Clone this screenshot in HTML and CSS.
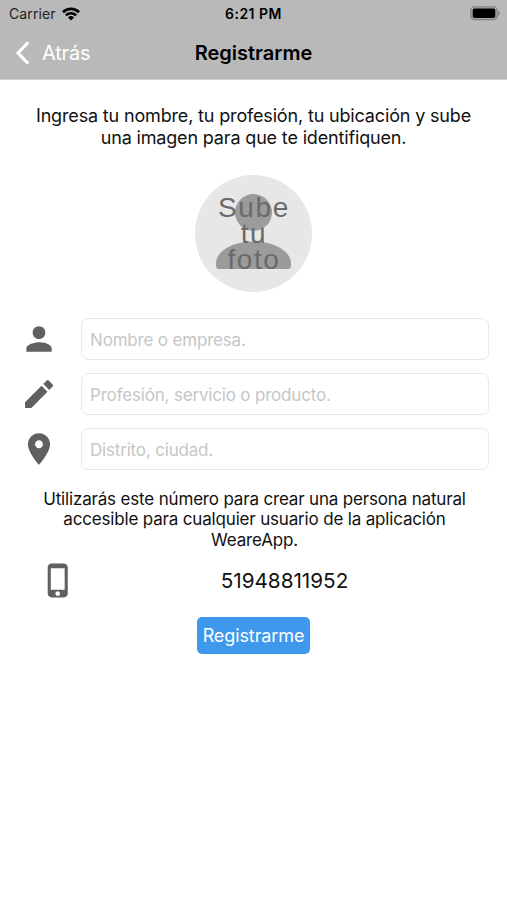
FILE: index.html
```
<!DOCTYPE html>
<html lang="es">
<head>
	<meta charset="UTF-8">
	<title>Registrarme</title>
	<link rel="stylesheet" href="styles.css">
</head>
<body>

	<div class="header">
		<div class="status">
			<div class="status-left">
				<span class="carrier">Carrier</span>
				<svg class="wifi" width="18" height="14" viewBox="0 0 18 14">
					<path d="M1 5.2a11.4 11.4 0 0 1 16 0" fill="none" stroke="#000" stroke-width="2.7"/>
					<path d="M3.9 8.3a7.3 7.3 0 0 1 10.2 0" fill="none" stroke="#000" stroke-width="2.5"/>
					<path d="M9 13.5L6 10.5a4.3 4.3 0 0 1 6 0z"/>
				</svg>
			</div>
			<div class="status-time">6:21 PM</div>
			<div class="status-right">
				<svg width="31" height="15" viewBox="0 0 31 15">
					<rect x="0.8" y="0.8" width="26.4" height="12.9" rx="3.6" fill="#aaa" stroke="#858585" stroke-width="1.3"/>
					<rect x="2.7" y="2.6" width="22.6" height="9.4" rx="1.8"/>
					<path d="M28.2 4.9c2.2.8 2.2 4 0 4.8z" fill="#858585"/>
				</svg>
			</div>
		</div>
		<div class="navbar">
			<a class="back" href="#">
				<svg width="16" height="24" viewBox="0 0 16 24">
					<path d="M13.2 1.4L3 12l10.2 10.6" fill="none" stroke="#fff" stroke-width="3.1"/>
				</svg>
				<span>Atrás</span>
			</a>
			<h1 class="title">Registrarme</h1>
		</div>
	</div>

	<div class="content">
		<p class="intro">Ingresa tu nombre, tu profesión, tu ubicación y sube<br>una imagen para que te identifiquen.</p>

		<div class="photo">
			<svg class="photo-icon" width="117" height="117" viewBox="0 0 117 117">
				<circle cx="58.5" cy="37.5" r="18.5"/>
				<path d="M21 91C19.5 76 37.5 66.500 58.500 66.500s39 9.500 37.500 24.500q-.3 3-3 3h-69q-2.700 0-3-3z"/>
			</svg>
			<div class="photo-text">Sube<br>tu<br>foto</div>
		</div>

		<form class="form">
			<div class="field">
				<svg class="field-icon" width="38" height="38" viewBox="0 0 24 24">
					<path d="M12 12c2.210 0 4-1.790 4-4s-1.790-4-4-4-4 1.790-4 4 1.790 4 4 4zm0 2c-2.670 0-8 1.340-8 4v2h16v-2c0-2.660-5.330-4-8-4z"/>
				</svg>
				<input type="text" placeholder="Nombre o empresa.">
			</div>
			<div class="field">
				<svg class="field-icon" width="38" height="38" viewBox="0 0 38 38">
					<path d="M5 32.2v-5L21.500 10.800l6 6L11.300 33H5.800q-.8 0-.8-.8z"/>
					<path d="M23.300 9l3.400-3.400q1-1 2 0l3.900 3.900q1 1 0 2L29.300 15z"/>
				</svg>
				<input type="text" placeholder="Profesión, servicio o producto.">
			</div>
			<div class="field">
				<svg class="field-icon" width="38" height="38" viewBox="0 0 24 24">
					<path d="M12 2C8.130 2 5 5.130 5 9c0 5.250 7 13 7 13s7-7.750 7-13c0-3.870-3.130-7-7-7zm0 9.500c-1.380 0-2.500-1.120-2.500-2.500s1.120-2.500 2.500-2.500 2.500 1.120 2.500 2.500-1.120 2.500-2.500 2.500z"/>
				</svg>
				<input type="text" placeholder="Distrito, ciudad.">
			</div>

			<p class="note">Utilizarás este número para crear una persona natural<br>accesible para cualquier usuario de la aplicación<br>WeareApp.</p>

			<div class="phone">
				<svg class="phone-icon" width="37" height="37" viewBox="0 0 24 24">
					<path d="M15.500 1h-8C6.120 1 5 2.120 5 3.500v17C5 21.880 6.120 23 7.500 23h8c1.380 0 2.500-1.120 2.500-2.500v-17C18 2.120 16.880 1 15.500 1zm-4 21c-.83 0-1.500-.67-1.500-1.500s.67-1.500 1.500-1.500 1.500.67 1.500 1.500-.67 1.500-1.500 1.500zm4.500-4H7V4h9v14z"/>
				</svg>
				<div class="phone-number">51948811952</div>
			</div>

			<button class="btn" type="button">Registrarme</button>
		</form>
	</div>

</body>
</html>
```

FILE: styles.css
```
* {
	box-sizing: border-box;
}
body {
	margin: 0;
	background-color: #fff;
	color: #111;
	font-family: Inter, "Liberation Sans", sans-serif;
}

.header {
	height: 80px;
	background-color: #b9b9b9;
	border-bottom: 1px solid #cfcfcf;
}
.status {
	display: grid;
	grid-template-columns: 1fr auto 1fr;
	align-items: center;
	height: 27px;
	padding: 0 6px 0 9px;
	font-size: 14px;
}
.status-left {
	display: flex;
	align-items: center;
	gap: 6px;
	color: #222;
}
.carrier {
	letter-spacing: 0.1px;
}
.status-time {
	margin-left: -3px;
	color: #000;
	font-weight: 600;
	letter-spacing: 0.500px;
}
.status-right {
	display: flex;
	justify-content: flex-end;
}

.navbar {
	display: grid;
	grid-template-columns: 1fr auto 1fr;
	align-items: center;
	height: 51px;
	padding: 0 15px;
}
.back {
	display: flex;
	align-items: center;
	gap: 11px;
	color: #fff;
	font-size: 20px;
	letter-spacing: -0.2px;
	text-decoration: none;
}
.title {
	margin: 0;
	color: #000;
	font-size: 20px;
	font-weight: 600;
}

.content {
	padding: 25px 18px 0;
}
.intro {
	margin: 0;
	font-size: 18px;
	line-height: 21.500px;
	letter-spacing: -0.160px;
	text-align: center;
	white-space: nowrap;
}

.photo {
	display: grid;
	width: 117px;
	height: 117px;
	margin: 27px auto 26px;
	border-radius: 50%;
	background-color: #e7e7e7;
}
.photo-icon, .photo-text {
	grid-area: 1 / 1;
}
.photo-icon {
	fill: #9b9b9b;
}
.photo-text {
	padding: 20px 0 0 1px;
	color: #6a6a6a;
	font-family: "Liberation Sans", Arial, sans-serif;
	font-size: 28px;
	line-height: 26px;
	letter-spacing: 1.600px;
	text-align: center;
}

.field {
	display: flex;
	align-items: center;
	gap: 23px;
	height: 42px;
	margin-bottom: 13px;
	padding-left: 2px;
}
.field-icon {
	flex: none;
	fill: #606060;
}
.field input {
	flex: 1;
	height: 42px;
	padding: 2px 8px 0;
	border: 1px solid #e9e9e9;
	border-radius: 7px;
	background-color: #fff;
	font-family: inherit;
	font-size: 17px;
	letter-spacing: -0.180px;
}
.field input::placeholder {
	color: #c6c6c6;
}

.note {
	margin: 19px 0 0;
	padding-left: 2px;
	font-size: 17px;
	line-height: 20.300px;
	letter-spacing: -0.170px;
	text-align: center;
	white-space: nowrap;
}

.phone {
	display: flex;
	align-items: center;
	height: 37px;
	margin-top: 12px;
	padding-left: 22px;
}
.phone-icon {
	flex: none;
	fill: #606060;
}
.phone-number {
	flex: 1;
	padding: 1px 0 0 3px;
	font-size: 20.700px;
	text-align: center;
}

.btn {
	display: block;
	width: 113px;
	height: 37px;
	margin: 18px auto 0;
	padding: 0;
	border: 0;
	border-radius: 5px;
	background-color: #3e98eb;
	color: #fff;
	font-family: inherit;
	font-size: 18px;
	letter-spacing: -0.1px;
}
```
